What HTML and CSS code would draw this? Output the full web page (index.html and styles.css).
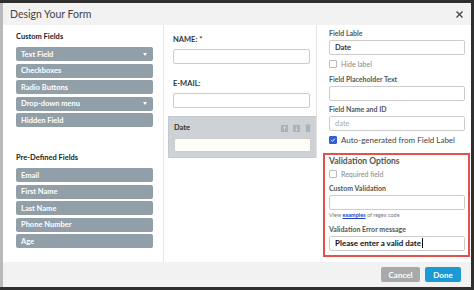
FILE: index.html
```html
<!DOCTYPE html>
<html>
<head>
  <meta charset="UTF-8" />
  <title>Design Your Form</title>
  <link rel="stylesheet" href="styles.css">
</head>
<body>
  <div class="dialog">
    <!-- Header -->
    <div class="dlg-head">
      <span class="dlg-title">Design Your Form</span>
      <svg class="dlg-close" width="7" height="7" viewBox="0 0 7 7">
        <path d="M0.5 0.5 L6.5 6.5 M6.5 0.5 L0.5 6.5" stroke="#444" stroke-width="1.3" fill="none"/>
      </svg>
    </div>

    <div class="dlg-body">
      <!-- Field palette -->
      <div class="col-fields">
        <div class="group-title">Custom Fields</div>
        <div class="field-list">
          <div class="field-item">Text Field <span class="caret"></span></div>
          <div class="field-item">Checkboxes</div>
          <div class="field-item">Radio Buttons</div>
          <div class="field-item">Drop-down menu <span class="caret"></span></div>
          <div class="field-item">Hidden Field</div>
        </div>

        <div class="group-title predefined">Pre-Defined Fields</div>
        <div class="field-list">
          <div class="field-item">Email</div>
          <div class="field-item">First Name</div>
          <div class="field-item">Last Name</div>
          <div class="field-item">Phone Number</div>
          <div class="field-item">Age</div>
        </div>
      </div>

      <!-- Form canvas -->
      <div class="col-form">
        <div class="form-canvas">
          <div class="form-row">
            <div class="form-label">NAME: *</div>
            <div class="form-input"></div>
          </div>
          <div class="form-row">
            <div class="form-label">E-MAIL:</div>
            <div class="form-input"></div>
          </div>
          <div class="form-row selected">
            <div class="sel-head">
              <span class="form-label">Date</span>
              <span class="sel-tools">
                <svg width="7" height="7" viewBox="0 0 7 7"><rect width="7" height="7" fill="#aab1b7"/><path d="M3.5 1.5 V5.5 M2 3 L3.5 1.5 L5 3" stroke="#d6dadd" stroke-width="0.8" fill="none"/></svg>
                <svg width="7" height="7" viewBox="0 0 7 7"><rect width="7" height="7" fill="#aab1b7"/><path d="M3.5 1.5 V5.5 M2 4 L3.5 5.5 L5 4" stroke="#d6dadd" stroke-width="0.8" fill="none"/></svg>
                <svg width="6" height="8" viewBox="0 0 6 8"><path d="M0 1.3 H6 M2 1.3 V0.4 H4 V1.3" stroke="#aab1b7" stroke-width="0.8" fill="none"/><rect x="0.8" y="2" width="4.4" height="6" fill="#aab1b7"/></svg>
              </span>
            </div>
            <div class="form-input"></div>
          </div>
        </div>
      </div>

      <!-- Field properties -->
      <div class="col-props">
        <div class="prop-group">
          <div class="prop-label">Field Lable</div>
          <div class="prop-input filled">Date</div>
          <div class="check-row"><span class="check"></span>Hide label</div>
          <div class="prop-label">Field Placeholder Text</div>
          <div class="prop-input"></div>
          <div class="prop-label">Field Name and ID</div>
          <div class="prop-input placeholder">date</div>
          <div class="check-row big">
            <span class="check checked">
              <svg width="8" height="8" viewBox="0 0 8 8"><path d="M1.6 4.2 L3.3 5.8 L6.5 2.3" stroke="#fff" stroke-width="1.3" fill="none"/></svg>
            </span>Auto-generated from Field Label
          </div>
        </div>

        <div class="validation">
          <div class="val-title">Validation Options</div>
          <div class="check-row"><span class="check"></span>Required field</div>
          <div class="prop-label">Custom Validation</div>
          <div class="prop-input"></div>
          <div class="hint">View <a href="#">examples</a> of regex code</div>
          <div class="prop-label">Validation Error message</div>
          <div class="prop-input filled dark">Please enter a valid date<span class="cursor"></span></div>
        </div>
      </div>
    </div>

    <!-- Footer -->
    <div class="dlg-foot">
      <button class="btn btn-cancel">Cancel</button>
      <button class="btn btn-done">Done</button>
    </div>
  </div>
</body>
</html>
```

FILE: styles.css
```css
html, body {
  margin: 0;
  height: 290px;
  overflow: hidden;
}
body {
  background: #2f2f2f;
  font-family: Lato, "Liberation Sans", sans-serif;
  padding: 3px 3px 3px 0;
  box-sizing: border-box;
}
.dialog {
  margin-left: 3px;
  width: 468px;
  height: 284px;
  display: flex;
  flex-direction: column;
  background: #fff;
  box-shadow: -3px 0 0 #b9b9b9;
}
.dlg-head {
  height: 22px;
  flex: none;
  background: #f2f2f2;
  display: flex;
  align-items: center;
  justify-content: space-between;
  padding: 0 8px 0 7px;
}
.dlg-title {
  font-size: 10.5px;
  color: #444;
}
.dlg-close {
  display: block;
}
.dlg-body {
  height: 237px;
  flex: none;
  display: flex;
}
.dlg-foot {
  flex: 1;
  background: #f2f2f2;
  display: flex;
  justify-content: flex-end;
  align-items: flex-start;
  gap: 5px;
  padding: 5px 10px 0 0;
}

/* left palette */
.col-fields {
  width: 160px;
  box-sizing: border-box;
  padding: 7px 10px 0 13px;
}
.group-title {
  font-size: 7.5px;
  font-weight: bold;
  color: #222;
  line-height: 10px;
  margin-bottom: 5px;
}
.group-title.predefined {
  margin-top: 26px;
}
.field-list {
  display: flex;
  flex-direction: column;
  gap: 2.5px;
}
.field-item {
  height: 14px;
  background: #919fa9;
  border-radius: 2px;
  color: #fff;
  font-size: 7.5px;
  font-weight: bold;
  display: flex;
  align-items: center;
  justify-content: space-between;
  padding: 0 6px 0 5px;
}
.caret {
  width: 0;
  height: 0;
  border-left: 2.5px solid transparent;
  border-right: 2.5px solid transparent;
  border-top: 3px solid #fff;
}

/* middle canvas */
.col-form {
  width: 153px;
  flex: none;
  border-left: 1px solid #e6e6e6;
}
.form-canvas {
  border-right: 1px solid #e2e2e2;
  padding-top: 10px;
}
.form-row {
  padding: 0 6px 0 9px;
  margin-bottom: 15px;
}
.form-label {
  font-size: 7.5px;
  font-weight: bold;
  color: #333;
  line-height: 10px;
}
.form-row > .form-label {
  margin-bottom: 4px;
}
.form-input {
  height: 15px;
  box-sizing: border-box;
  border: 1px solid #ccc;
  border-radius: 2px;
  background: #fff;
}
.form-row.selected {
  margin: -7px 0 0 4px;
  padding: 6px 5px 5px 5px;
  background: #cdd2d6;
  border: 1px solid #c3c9ce;
  border-right: none;
}
.selected .form-input {
  height: 14px;
  background: #fffdf8;
}
.sel-head {
  display: flex;
  justify-content: space-between;
  align-items: center;
  margin-bottom: 5px;
}
.sel-tools {
  display: flex;
  gap: 5px;
  align-items: center;
}
.sel-tools svg {
  display: block;
}

/* right properties */
.col-props {
  flex: 1;
  min-width: 0;
  padding: 3px 1px 0 6px;
}
.prop-group {
  padding: 0 5px 0 6px;
}
.prop-label {
  font-size: 7px;
  font-weight: bold;
  color: #555;
  line-height: 10px;
  margin-bottom: 2px;
}
.prop-input {
  height: 15px;
  box-sizing: border-box;
  border: 1px solid #ccc;
  border-radius: 2px;
  font-size: 7.5px;
  line-height: 13px;
  padding-left: 5px;
  margin-bottom: 3px;
}
.prop-input.filled {
  font-weight: bold;
  color: #333;
}
.prop-input.dark {
  color: #111;
  font-size: 8px;
}
.prop-input.placeholder {
  color: #aaa;
}
.cursor {
  display: inline-block;
  width: 1px;
  height: 10px;
  background: #111;
  vertical-align: -2px;
  margin-left: 1px;
}
.check-row {
  display: flex;
  align-items: center;
  gap: 4px;
  font-size: 7px;
  color: #888;
  line-height: 10px;
  margin: 4px 0 5px;
  white-space: nowrap;
}
.check-row.big {
  font-size: 8px;
  color: #444;
  margin-top: 4px;
}
.check {
  width: 8px;
  height: 8px;
  flex: none;
  box-sizing: border-box;
  border: 1px solid #bbb;
  border-radius: 1px;
  display: flex;
  align-items: center;
  justify-content: center;
}
.check.checked {
  background: #2f5fd0;
  border-color: #2f5fd0;
}
.validation {
  margin-top: 8px;
  border: 2px solid #e2524a;
  padding: 0 3px 4px 4px;
}
.val-title {
  font-size: 8.5px;
  font-weight: bold;
  color: #555;
  line-height: 12px;
}
.validation .check-row {
  margin: 2px 0 4px;
}
.hint {
  font-size: 5.5px;
  color: #777;
  line-height: 7px;
  margin: -1px 0 5px;
}
.hint a {
  color: #1f3fc8;
  font-weight: bold;
}
.validation .prop-input:last-child {
  margin-bottom: 0;
}

/* footer buttons */
.btn {
  height: 15px;
  border: none;
  border-radius: 2px;
  color: #fff;
  font-family: Lato, "Liberation Sans", sans-serif;
  font-size: 8px;
  font-weight: bold;
  padding: 0;
  cursor: pointer;
}
.btn-cancel {
  width: 39px;
  background: #a9a9a9;
}
.btn-done {
  width: 36px;
  background: #1b9ad6;
}
```
